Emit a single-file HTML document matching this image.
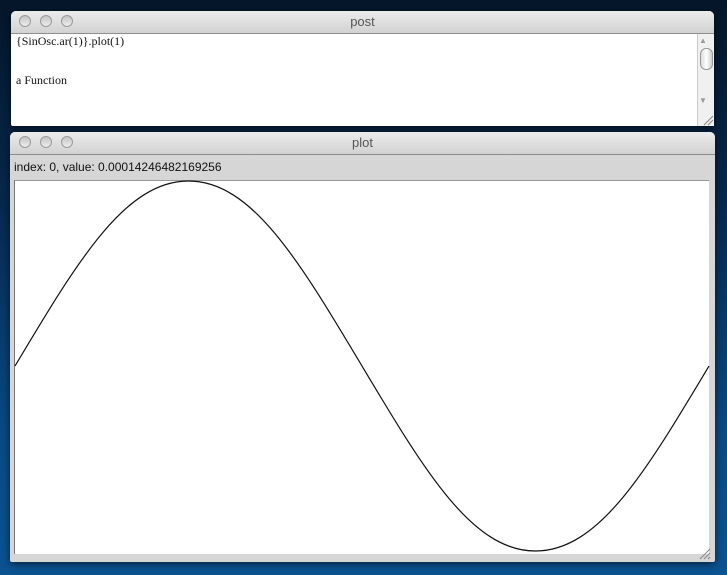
<!DOCTYPE html>
<html><head><style>
html,body{margin:0;padding:0}
body{width:727px;height:575px;overflow:hidden;position:relative;background:linear-gradient(#051629 0%,#07284d 35%,#0a4a82 75%,#0b5391 100%);font-family:"Liberation Sans",sans-serif}
.win{position:absolute;background:#d6d6d6;border-radius:5px 5px 2px 2px;box-shadow:0 2px 8px rgba(0,0,0,.6)}
.tb{position:absolute;left:0;right:0;top:0;height:22px;background:linear-gradient(#ececec,#d2d2d2);border-radius:5px 5px 0 0;border-bottom:1px solid #8e8e8e;text-align:center;font-size:13px;line-height:21px;color:#555}
.btn{position:absolute;top:4px;width:12px;height:12px;border-radius:50%;background:linear-gradient(#c4c4c4,#ededed);border:1px solid #9a9a9a;box-sizing:border-box}
</style></head><body>
<div class="win" style="left:11px;top:11px;width:703px;height:115px;background:#fff">
 <div class="tb">post<div class="btn" style="left:8px"></div><div class="btn" style="left:29px"></div><div class="btn" style="left:50px"></div></div>
 <div style="position:absolute;left:5px;top:23px;font-family:'Liberation Serif',serif;font-size:12px;color:#111">{SinOsc.ar(1)}.plot(1)</div>
 <div style="position:absolute;left:5px;top:62px;font-family:'Liberation Serif',serif;font-size:12px;color:#111">a Function</div>
 <div style="position:absolute;right:0;top:23px;width:16px;height:92px;background:#f0f0f0;border-left:1px solid #ccc">
  <div style="position:absolute;left:2px;top:14px;width:11px;height:20px;border-radius:6px;border:1px solid #999;background:linear-gradient(90deg,#ddd,#fff,#ccc)"></div>
  <div style="position:absolute;left:1px;top:2px;font-size:8px;color:#999">▲</div>
  <div style="position:absolute;left:1px;top:62px;font-size:8px;color:#999">▼</div>
 </div>
</div>
<div class="win" style="left:10px;top:132px;width:705px;height:430px">
 <div class="tb">plot<div class="btn" style="left:9px"></div><div class="btn" style="left:30px"></div><div class="btn" style="left:51px"></div></div>
 <div style="position:absolute;left:4px;top:28px;font-size:12px;color:#111">index: 0, value: 0.00014246482169256</div>
 <div style="position:absolute;left:4px;top:48px;width:694px;height:373px;background:#fff;border-left:1px solid #777;border-top:1px solid #999"></div>
</div>
<svg style="position:absolute;left:0;top:0" width="727" height="575">
<path d="M15,366 C78.2,260.2 125.3,181 188.5,181 C251.7,181 298.8,260.2 362,366 C425.2,471.8 472.3,551 535.5,551 C598.7,551 645.8,471.8 709,366" fill="none" stroke="#111" stroke-width="1.2"/>
<path d="M700,559 L710,549 M704,559 L710,553 M708,559 L710,557" stroke="#888" stroke-width="1"/>
<path d="M704,125 L713,116 M708,125 L713,120" stroke="#888" stroke-width="1"/>
</svg>
</body></html>
